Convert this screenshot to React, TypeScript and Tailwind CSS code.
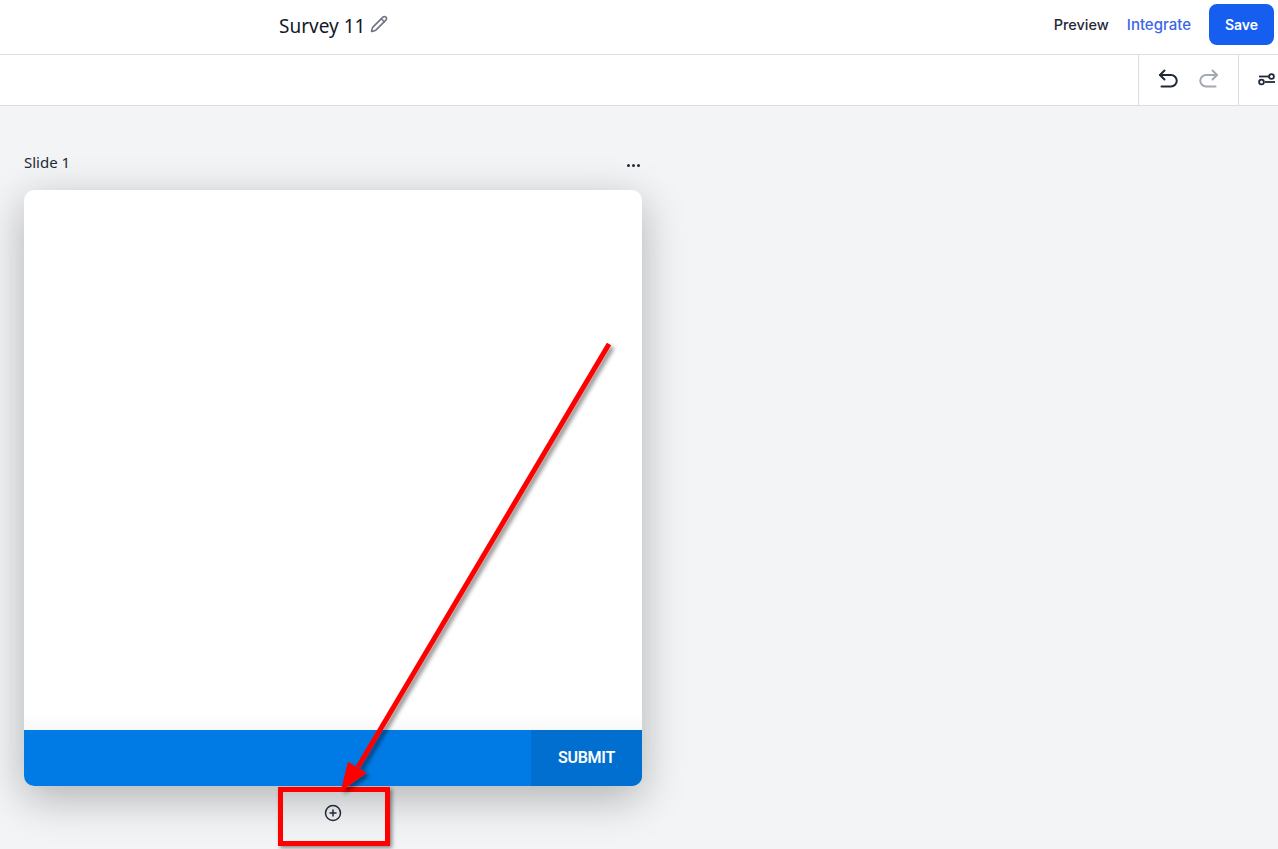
import { CirclePlus, Pencil } from "lucide-react";

export default function App() {
  return (
    <div className="relative h-[849px] w-[1278px] overflow-hidden bg-[#f3f4f6] font-['Inter',sans-serif]">
      {/* Top bar */}
      <header className="flex h-[55px] items-start border-b border-[#e0e0e2] bg-white pl-[279px] pr-1">
        <h1 className="mt-[16px] font-['Noto_Sans',sans-serif] text-[19px] leading-[20px] text-[#111827]">Survey 11</h1>
        <Pencil className="ml-[5px] mt-[15px] h-[18px] w-[18px] text-[#6b7280]" strokeWidth={2} />
        <div className="ml-auto mt-[4px] flex items-center">
          <span className="text-[14.5px] font-medium leading-[20px] text-[#1f2937]">Preview</span>
          <span className="ml-[18px] mt-[1px] text-[15px] font-medium leading-[20px] text-[#3b66e8]">Integrate</span>
          <button className="ml-[18px] h-[41px] w-[65px] rounded-[8px] bg-[#155eef] text-[14px] font-semibold text-white">
            Save
          </button>
        </div>
      </header>

      {/* Toolbar */}
      <div className="flex h-[51px] justify-end border-b border-[#dcdde0] bg-white">
        <div className="flex w-[100px] items-center justify-center gap-[21px] border-l border-[#dcdde0] pb-[3px]">
          <svg className="h-[20px] w-[20px] text-[#1f2937]" viewBox="0 0 20 20" fill="none" stroke="currentColor" strokeWidth="2" strokeLinecap="round" strokeLinejoin="round">
            <path d="M6.5 1.5 2 6l4.5 4.5" />
            <path d="M2 6h11a4.75 4.75 0 0 1 0 11.5H3.5" />
          </svg>
          <svg className="h-[20px] w-[20px] text-[#a3a8b1]" viewBox="0 0 20 20" fill="none" stroke="currentColor" strokeWidth="2" strokeLinecap="round" strokeLinejoin="round">
            <path d="M13.5 1.5 18 6l-4.5 4.5" />
            <path d="M18 6H7a4.75 4.75 0 0 0 0 11.5h9.5" />
          </svg>
        </div>
        <div className="flex w-[40px] items-center border-l border-[#dcdde0] pb-[2px] pl-[19px]">
          <svg className="h-[16px] w-[21px] shrink-0 text-[#1f2937]" viewBox="0 0 21 16" fill="none" stroke="currentColor" strokeWidth="1.8">
            <path d="M1 5.5h10" />
            <circle cx="13.5" cy="5.5" r="2.4" />
            <path d="M7 11h10" />
            <circle cx="3.5" cy="11" r="2.4" />
          </svg>
        </div>
      </div>

      {/* Slide */}
      <main className="w-[666px] px-6 pt-[47px]">
        <div className="flex h-[37px] items-start justify-between">
          <span className="font-['Noto_Sans',sans-serif] text-[15px] leading-[19px] text-[#1f2937]">Slide 1</span>
          <div className="mr-[2px] mt-[11px] flex gap-[2px]">
            <span className="h-[3px] w-[3px] rounded-full bg-[#1f2937]" />
            <span className="h-[3px] w-[3px] rounded-full bg-[#1f2937]" />
            <span className="h-[3px] w-[3px] rounded-full bg-[#1f2937]" />
          </div>
        </div>
        <div className="flex h-[596px] flex-col overflow-hidden rounded-[10px] bg-white shadow-[0_12px_44px_rgba(0,0,0,0.28)]">
          <div className="flex-1" />
          <div className="h-[16px] bg-gradient-to-b from-white to-[#f8f8f8]" />
          <div className="flex h-[56px] justify-end bg-[#007be5]">
            <div className="flex w-[111px] items-center justify-center bg-[#006fcf] font-['Roboto',sans-serif] text-[16px] font-semibold tracking-[-0.3px] text-white">
              SUBMIT
            </div>
          </div>
        </div>
        <div className="mt-[18px] flex justify-center pr-[1px]">
          <CirclePlus className="h-[18px] w-[18px] text-[#1f2937]" strokeWidth={2} />
        </div>
      </main>

      {/* Red annotation on top of the capture */}
      <div className="absolute left-[278px] top-[787px] h-[59px] w-[112px] border-[5px] border-[#ff0000] shadow-[2px_2px_4px_rgba(0,0,0,0.45)]" />
      <svg className="absolute left-0 top-0 h-[849px] w-[1278px]" viewBox="0 0 1278 849" fill="none">
        <defs>
          <filter id="arrowShadow" x="-20%" y="-20%" width="140%" height="140%">
            <feDropShadow dx="3" dy="3" stdDeviation="2" floodColor="#000" floodOpacity="0.45" />
          </filter>
        </defs>
        <g filter="url(#arrowShadow)">
          <path d="M609 344 358 767" stroke="#ff0000" strokeWidth="5" />
          <path d="M343 788 349 764 364 773 Z" fill="#ff0000" stroke="#ff0000" strokeWidth="3" />
        </g>
      </svg>
    </div>
  );
}
